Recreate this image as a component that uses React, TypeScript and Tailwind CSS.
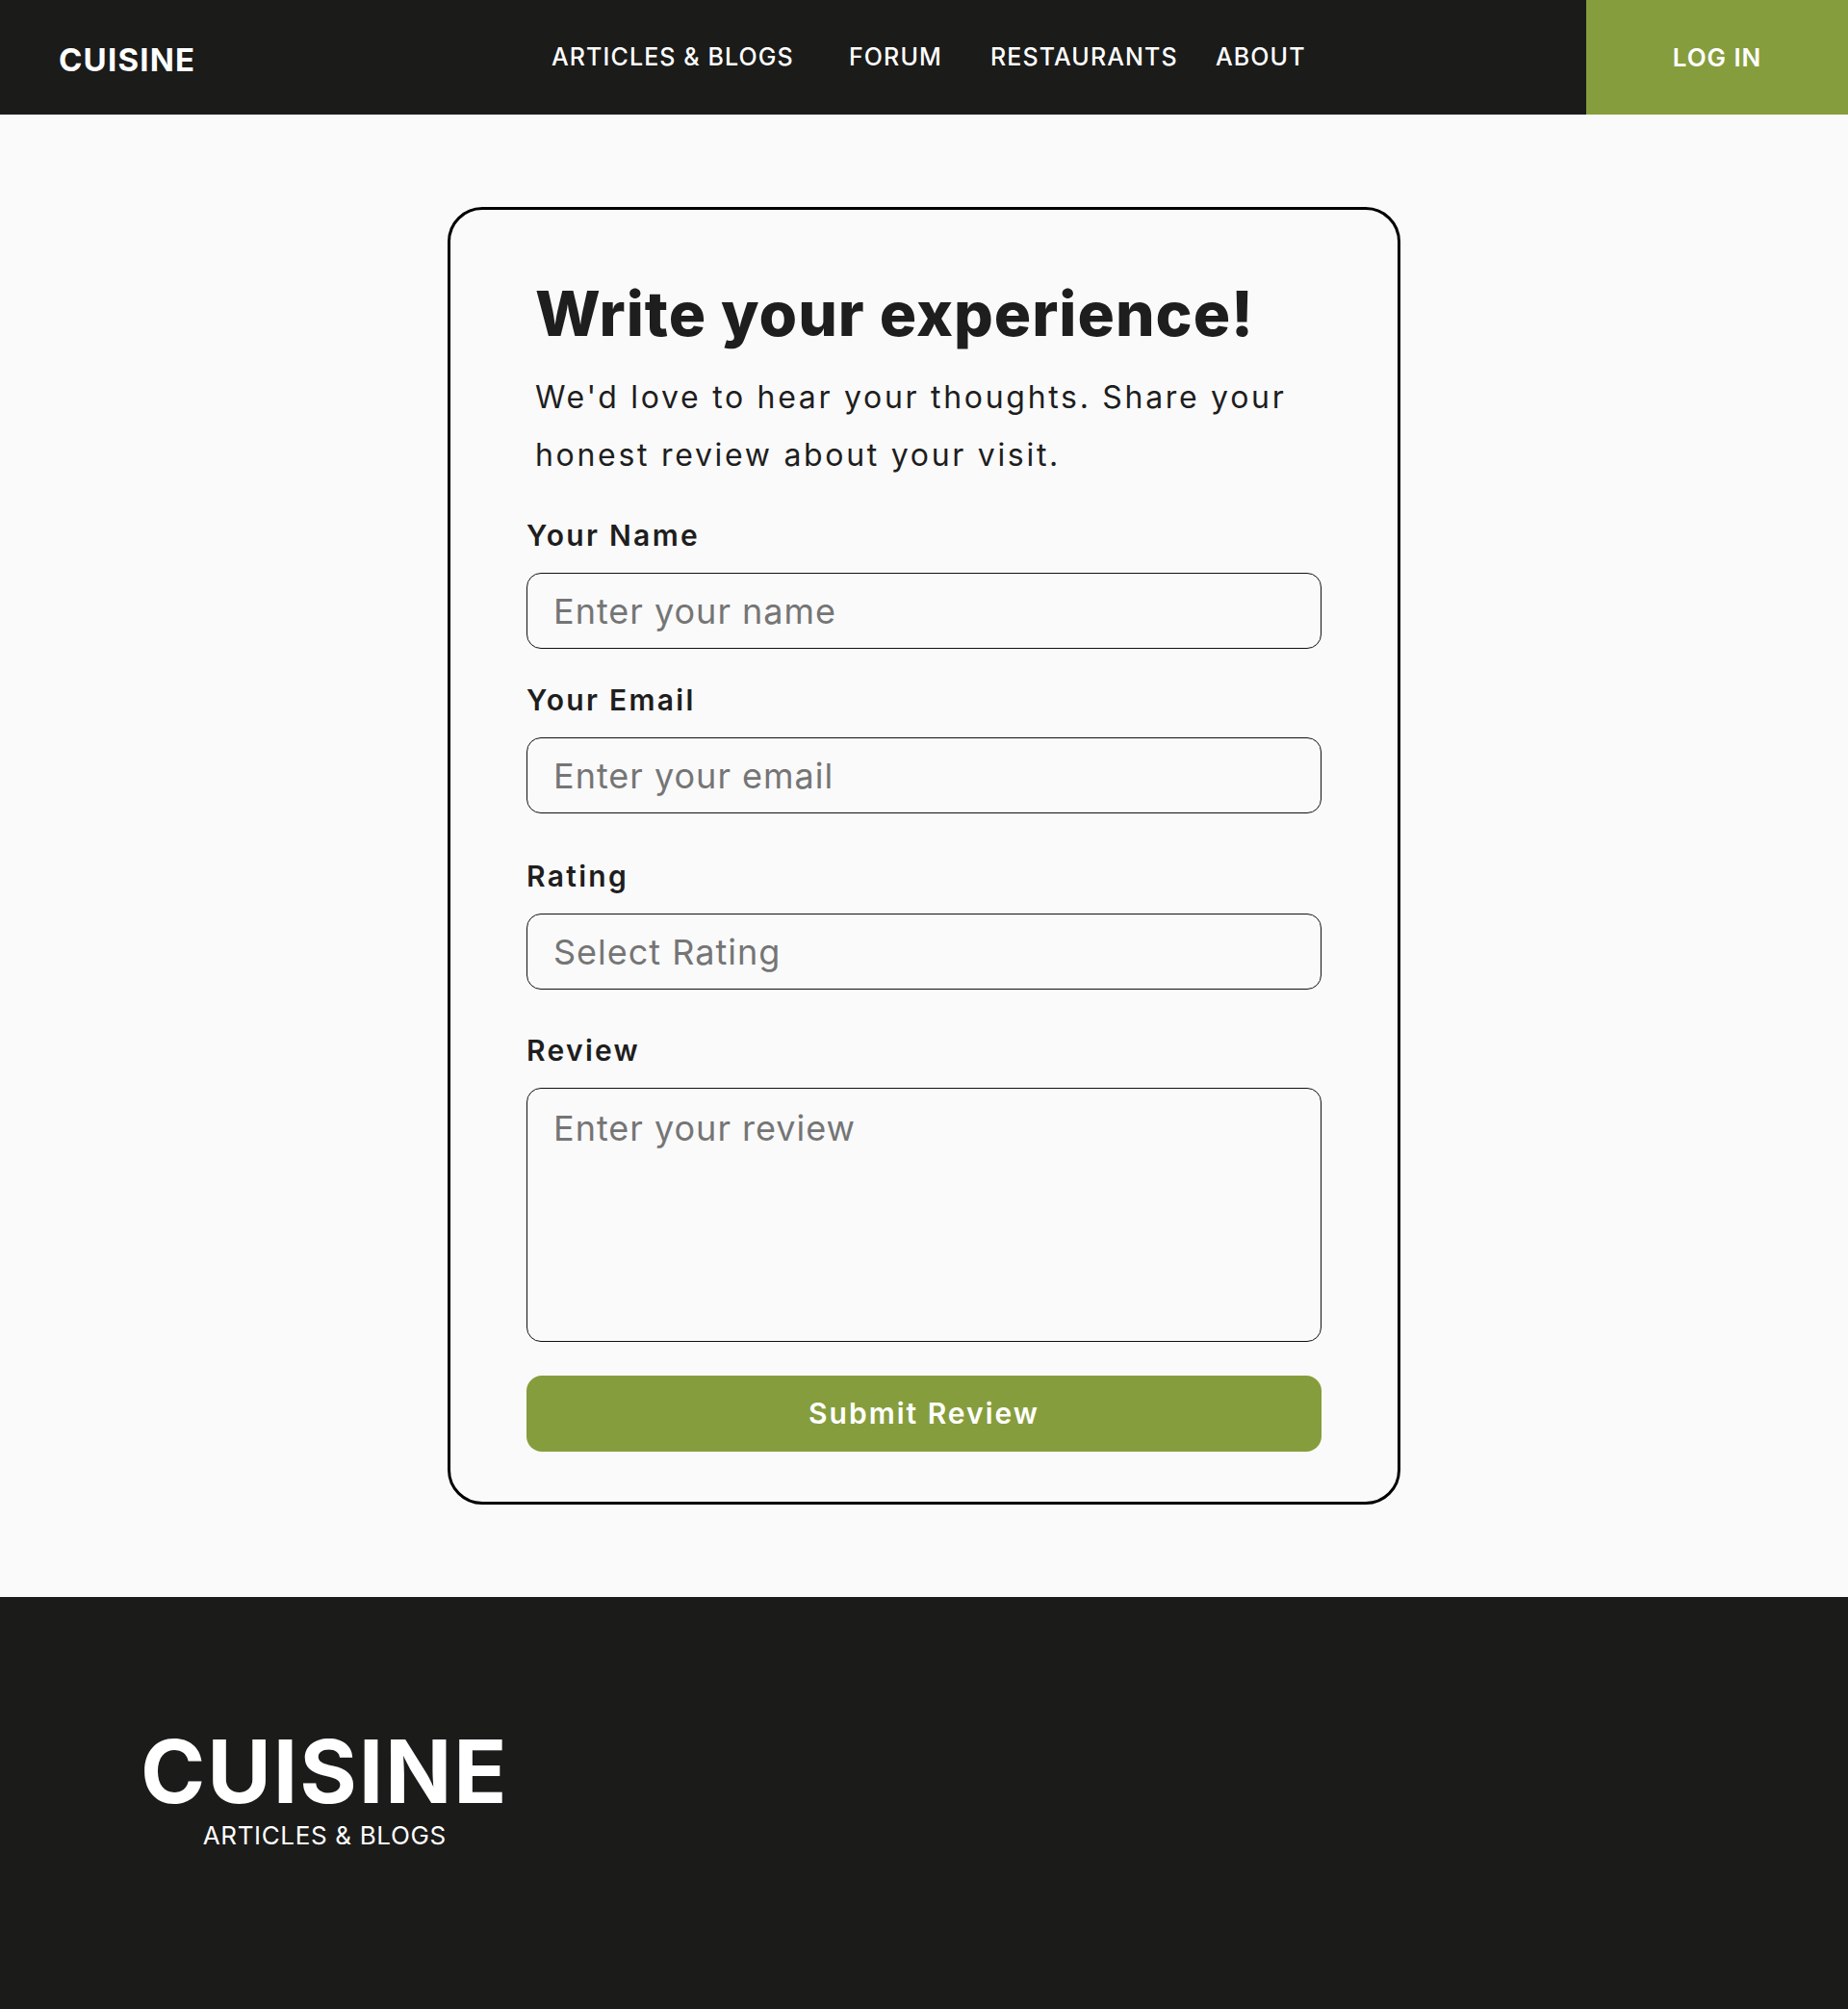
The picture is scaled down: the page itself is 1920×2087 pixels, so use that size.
import { useState } from "react";

const navLinks = [
  { label: "ARTICLES & BLOGS", width: "w-[309px]" },
  { label: "FORUM", width: "w-[147px]" },
  { label: "RESTAURANTS", width: "w-[234px]" },
  { label: "ABOUT", width: "" },
];

function Header() {
  return (
    <header className="flex h-[119px] items-stretch bg-[#1b1b1a] text-white">
      <div className="flex w-[573px] shrink-0 items-center pl-[61px]">
        <span className="mt-[5px] text-[33px] font-bold leading-none tracking-[1.2px]">CUISINE</span>
      </div>

      <nav className="flex flex-1 items-center">
        {navLinks.map(({ label, width }) => (
          <a key={label} href="#" className={`${width} text-[25px] font-medium leading-none tracking-[1.1px]`}>
            {label}
          </a>
        ))}
      </nav>

      <button
        type="button"
        className="flex w-[272px] shrink-0 items-center justify-center bg-[#869d3d] text-[26px] font-semibold leading-none tracking-[0.9px]"
      >
        LOG IN
      </button>
    </header>
  );
}

function Label({ children }: { children: string }) {
  return (
    <label className="mb-6 block text-[30px] font-semibold leading-[30px] tracking-[2.3px] text-[#1e1e1e]">
      {children}
    </label>
  );
}

const fieldClass =
  "block h-[79px] w-full rounded-[15px] border border-[#111] bg-transparent px-[27px] text-[36px] tracking-[1px] text-[#1e1e1e] outline-none placeholder:text-[#757575]";

function ReviewCard() {
  const [rating, setRating] = useState("");

  return (
    <div className="mx-auto w-[990px] rounded-[36px] border-[3px] border-black px-[79px] pt-[76px] pb-[52px]">
      <div className="pl-[9px]">
        <h1 className="text-[64px] font-extrabold leading-[64px] tracking-[1px] text-[#1e1e1e]">
          Write your experience!
        </h1>
        <p className="mt-[25px] text-[32px] leading-[60px] tracking-[2.7px] text-[#1e1e1e]">
          We'd love to hear your thoughts. Share your
          <br />
          honest review about your visit.
        </p>
      </div>

      <form className="flex flex-col">
        <div className="mt-[38px]">
          <Label>Your Name</Label>
          <input type="text" placeholder="Enter your name" className={fieldClass} />
        </div>

        <div className="mt-[38px]">
          <Label>Your Email</Label>
          <input type="email" placeholder="Enter your email" className={fieldClass} />
        </div>

        <div className="mt-[50px]">
          <Label>Rating</Label>
          <select
            value={rating}
            onChange={(e) => setRating(e.target.value)}
            className={`${fieldClass} appearance-none text-[#757575]`}
          >
            <option value="">Select Rating</option>
            <option value="5">5 - Excellent</option>
            <option value="4">4 - Good</option>
            <option value="3">3 - Average</option>
            <option value="2">2 - Poor</option>
            <option value="1">1 - Terrible</option>
          </select>
        </div>

        <div className="mt-[48px]">
          <Label>Review</Label>
          <textarea
            placeholder="Enter your review"
            className="block h-[264px] w-full resize-none rounded-[15px] border border-[#111] bg-transparent px-[27px] pt-[14px] text-[36px] leading-[54px] tracking-[1px] text-[#1e1e1e] outline-none placeholder:text-[#757575]"
          />
        </div>

        <button
          type="button"
          className="mt-[35px] h-[79px] w-full rounded-[16px] bg-[#869d3d] text-[30px] font-semibold tracking-[2px] text-white"
        >
          Submit Review
        </button>
      </form>
    </div>
  );
}

function Footer() {
  return (
    <footer className="h-[428px] bg-[#1b1b1a] pt-[136px] pl-[146px] text-white">
      <div className="flex w-fit flex-col items-center">
        <span className="text-[91px] font-bold leading-[91px] tracking-[1.9px]">CUISINE</span>
        <span className="mt-[8px] text-[26px] leading-[26px] tracking-[0.65px]">ARTICLES &amp; BLOGS</span>
      </div>
    </footer>
  );
}

export default function App() {
  return (
    <div className="min-h-screen bg-[#fafafa] font-['Inter','Noto_Sans',sans-serif]">
      <Header />
      <main className="py-24">
        <ReviewCard />
      </main>
      <Footer />
    </div>
  );
}
